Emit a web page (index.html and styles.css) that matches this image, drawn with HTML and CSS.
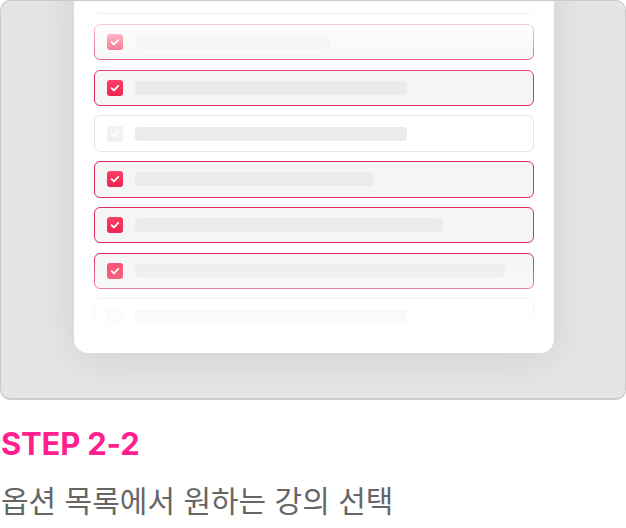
FILE: index.html
```html
<!DOCTYPE html>
<html lang="ko">
<head>
<meta charset="utf-8">
<link rel="stylesheet" href="styles.css">
</head>
<body>
<div class="frame">
  <div class="card">
    <div class="list">
      <div class="row on"><span class="box"><svg viewBox="0 0 16 16"><path d="M4.6 8.2l2.3 2.2 4.4-4.5"/></svg></span><span class="bar" style="width:195px"></span></div>
      <div class="row on"><span class="box"><svg viewBox="0 0 16 16"><path d="M4.6 8.2l2.3 2.2 4.4-4.5"/></svg></span><span class="bar" style="width:195px"></span></div>
      <div class="row on"><span class="box"><svg viewBox="0 0 16 16"><path d="M4.6 8.2l2.3 2.2 4.4-4.5"/></svg></span><span class="bar" style="width:272px"></span></div>
      <div class="row off"><span class="box"><svg viewBox="0 0 16 16"><path d="M4.6 8.2l2.3 2.2 4.4-4.5"/></svg></span><span class="bar" style="width:272px"></span></div>
      <div class="row on"><span class="box"><svg viewBox="0 0 16 16"><path d="M4.6 8.2l2.3 2.2 4.4-4.5"/></svg></span><span class="bar" style="width:239px"></span></div>
      <div class="row on"><span class="box"><svg viewBox="0 0 16 16"><path d="M4.6 8.2l2.3 2.2 4.4-4.5"/></svg></span><span class="bar" style="width:308px"></span></div>
      <div class="row on"><span class="box"><svg viewBox="0 0 16 16"><path d="M4.6 8.2l2.3 2.2 4.4-4.5"/></svg></span><span class="bar" style="width:370px"></span></div>
      <div class="row off"><span class="box"><svg viewBox="0 0 16 16"><path d="M4.6 8.2l2.3 2.2 4.4-4.5"/></svg></span><span class="bar" style="width:272px"></span></div>
    </div>
  </div>
</div>
<h2 class="step">STEP 2-2</h2>
<p class="desc">옵션 목록에서 원하는 강의 선택</p>
</body>
</html>
```

FILE: styles.css
```css
* { box-sizing: border-box; }
html, body { margin: 0; padding: 0; background: #fff; }
body { width: 626px; font-family: Inter, "Noto Sans CJK KR", sans-serif; }

.frame {
  width: 626px;
  height: 400px;
  border: 1px solid #cbcbcb;
  border-bottom-width: 2px;
  border-radius: 10px;
  background: #e5e5e5;
  overflow: hidden;
  position: relative;
}

.card {
  width: 480px;
  margin: -31px 0 0 73px;
  padding: 8px 20px 19px;
  background: #fff;
  border-radius: 0 0 14px 14px;
  box-shadow: 0 6px 40px rgba(0, 0, 0, 0.09);
}

.list {
  display: flex;
  flex-direction: column;
  gap: 9.4px;
  height: 356px;
  overflow: hidden;
  -webkit-mask-image: linear-gradient(to bottom, transparent 28px, #000 100px, #000 276px, transparent 362px);
  mask-image: linear-gradient(to bottom, transparent 28px, #000 100px, #000 276px, transparent 362px);
}

.row {
  flex: none;
  height: 36.4px;
  border-radius: 6px;
  border: 1.6px solid #df2f59;
  background: #f5f5f6;
  display: flex;
  align-items: center;
  padding-left: 12px;
  gap: 12px;
}

.row.off {
  border-color: #e6e6e6;
  background: #fff;
}

.box {
  width: 16px;
  height: 16px;
  border-radius: 3px;
  background: linear-gradient(#ff3e65, #ec2450);
  display: flex;
  align-items: center;
  justify-content: center;
}

.off .box { background: #f1f1f1; }

.box svg { width: 16px; height: 16px; }
.box path {
  fill: none;
  stroke: #fff;
  stroke-width: 1.8;
  stroke-linecap: round;
  stroke-linejoin: round;
}

.bar {
  height: 14px;
  border-radius: 4px;
  background: #ebebeb;
}

.step {
  margin: 25px 0 0 1px;
  font-size: 31px;
  line-height: 38px;
  font-weight: 700;
  color: #ff1f8f;
  letter-spacing: -0.2px;
}

.desc {
  margin: 16px 0 0 1px;
  font-family: "Noto Sans CJK KR", sans-serif;
  font-size: 30px;
  line-height: 40px;
  font-weight: 400;
  color: #666;
}
```
